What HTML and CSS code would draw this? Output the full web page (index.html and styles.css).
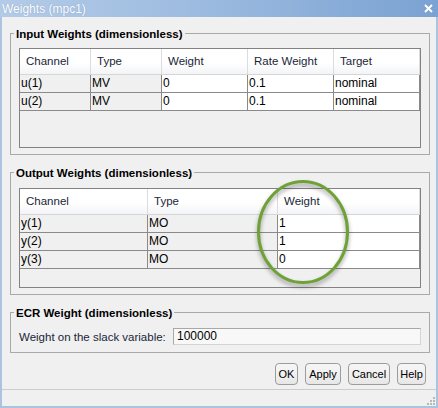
FILE: index.html
```html
<!DOCTYPE html>
<html>
<head>
<meta charset="utf-8">
<title>Weights (mpc1)</title>
<link rel="stylesheet" href="styles.css">
</head>
<body>
<div class="window">
  <div class="titlebar">
    <span class="title">Weights (mpc1)</span>
    <svg class="close" width="9" height="9" viewBox="0 0 9 9"><path d="M1 1 L8 8 M8 1 L1 8" stroke="#ffffff" stroke-width="1.8" fill="none"/></svg>
  </div>
  <div class="frame">
    <section class="group g-input">
      <div class="group-title">Input Weights (dimensionless)</div>
      <div class="table t-input">
        <div class="thead">
          <div class="th">Channel</div><div class="th">Type</div><div class="th">Weight</div><div class="th">Rate Weight</div><div class="th">Target</div>
        </div>
        <div class="tr">
          <div class="td ro">u(1)</div><div class="td ro">MV</div><div class="td">0</div><div class="td">0.1</div><div class="td">nominal</div>
        </div>
        <div class="tr">
          <div class="td ro">u(2)</div><div class="td ro">MV</div><div class="td">0</div><div class="td">0.1</div><div class="td">nominal</div>
        </div>
        <div class="filler f-input"></div>
      </div>
    </section>

    <section class="group g-output">
      <div class="group-title">Output Weights (dimensionless)</div>
      <div class="table t-output">
        <div class="thead">
          <div class="th">Channel</div><div class="th">Type</div><div class="th">Weight</div>
        </div>
        <div class="tr">
          <div class="td ro">y(1)</div><div class="td ro">MO</div><div class="td">1</div>
        </div>
        <div class="tr">
          <div class="td ro">y(2)</div><div class="td ro">MO</div><div class="td">1</div>
        </div>
        <div class="tr">
          <div class="td ro">y(3)</div><div class="td ro">MO</div><div class="td">0</div>
        </div>
        <div class="filler f-output"></div>
      </div>
    </section>

    <section class="group g-ecr">
      <div class="group-title">ECR Weight (dimensionless)</div>
      <div class="ecr-row">
        <span class="label">Weight on the slack variable:</span>
        <div class="field">100000</div>
      </div>
    </section>

    <div class="buttons">
      <div class="btn b-ok">OK</div>
      <div class="btn b-apply">Apply</div>
      <div class="btn b-cancel">Cancel</div>
      <div class="btn b-help">Help</div>
    </div>

    <div class="statusbar">
      <svg class="grip" width="12" height="10" viewBox="0 0 12 10">
        <rect x="9" y="1" width="2" height="2" fill="#b8b8b8"/>
        <rect x="6" y="4" width="2" height="2" fill="#b8b8b8"/>
        <rect x="9" y="4" width="2" height="2" fill="#b8b8b8"/>
        <rect x="3" y="7" width="2" height="2" fill="#b8b8b8"/>
        <rect x="6" y="7" width="2" height="2" fill="#b8b8b8"/>
        <rect x="9" y="7" width="2" height="2" fill="#b8b8b8"/>
      </svg>
    </div>
  </div>

  <svg class="highlight" width="110" height="122" viewBox="0 0 110 122">
    <ellipse cx="53" cy="57" rx="44.5" ry="50.5" fill="none" stroke="#6ea238" stroke-width="3"/>
  </svg>
</div>
</body>
</html>
```
FILE: styles.css
```css
html, body {
  margin: 0;
  padding: 0;
  background: #f0f0f0;
}

.window {
  position: relative;
  width: 438px;
  height: 408px;
  display: flex;
  flex-direction: column;
  font-family: "Liberation Sans", Arial, sans-serif;
  font-size: 12px;
  overflow: hidden;
}

.titlebar {
  height: 17px;
  flex: none;
  display: flex;
  align-items: center;
  justify-content: space-between;
  padding: 0 5px 0 2px;
  background: linear-gradient(to right, #b3cbe7 0%, #9dbbe0 45%, #7aa2d2 100%);
}

.title {
  color: #ffffff;
  font-size: 12px;
  line-height: 16px;
  text-shadow: 0 0 1px rgba(40, 70, 120, 0.35);
}

.close {
  display: block;
  margin-top: -1px;
}

.frame {
  flex: 1;
  min-height: 0;
  display: flex;
  flex-direction: column;
  border-left: 2px solid #aac3e1;
  border-right: 2px solid #aac3e1;
  border-bottom: 2px solid #aac3e1;
  background: #f0f0f0;
}

.group {
  flex: none;
  margin: 0 6px 0 8px;
  border: 1px solid #a9a9a9;
  padding: 0 8px 6px 8px;
}

.g-input { margin-top: 16px; }
.g-output { margin-top: 17px; }
.g-ecr { margin-top: 17px; padding-bottom: 7px; }

.group-title {
  display: block;
  width: max-content;
  margin: -7px 0 0 -5px;
  padding: 0 2px;
  height: 14px;
  line-height: 14px;
  font-size: 11.5px;
  font-weight: bold;
  color: #000000;
  background: #f0f0f0;
}

.table {
  width: 402px;
  box-sizing: border-box;
  border: 1px solid #828282;
  background: #f0f0f0;
  margin-top: 7px;
}

.g-output .table { margin-top: 8px; }

.thead, .tr {
  display: grid;
}

.t-input .thead, .t-input .tr {
  grid-template-columns: 71px 71px 86px 86px 86px;
}

.t-output .thead, .t-output .tr {
  grid-template-columns: 128px 130px 142px;
}

.th {
  box-sizing: border-box;
  height: 26px;
  padding-left: 6px;
  line-height: 25px;
  font-size: 11.5px;
  color: #1a2638;
  background: linear-gradient(to bottom, #ffffff 0%, #ffffff 55%, #f3f4f6 100%);
  border-right: 1px solid #dcdcdc;
  border-bottom: 1px solid #d6d6d6;
  white-space: nowrap;
}

.td {
  box-sizing: border-box;
  height: 18px;
  padding-left: 1px;
  line-height: 17px;
  font-size: 12px;
  color: #000000;
  background: #ffffff;
  border-right: 1px solid #8a8a8a;
  border-bottom: 1px solid #8a8a8a;
  white-space: nowrap;
}

.td.ro {
  background: #f0f0f0;
}

.f-input { height: 36px; }
.f-output { height: 18px; }

.ecr-row {
  margin-top: 8px;
  display: flex;
  align-items: center;
  justify-content: space-between;
}

.label {
  font-size: 11.5px;
  color: #1a2638;
}

.field {
  box-sizing: border-box;
  width: 248px;
  height: 17px;
  padding-left: 3px;
  line-height: 15px;
  font-size: 12px;
  color: #000000;
  background: #f8f8f8;
  border: 1px solid #a8a8a8;
  border-right-color: #d4d4d4;
  border-bottom-color: #d4d4d4;
}

.buttons {
  flex: none;
  margin-top: 10px;
  margin-right: 10px;
  display: flex;
  justify-content: flex-end;
  gap: 7px;
}

.btn {
  box-sizing: border-box;
  height: 22px;
  line-height: 20px;
  text-align: center;
  font-size: 11px;
  color: #000000;
  background: linear-gradient(to bottom, #f6f6f6 0%, #efefef 60%, #e6e6e6 100%);
  border: 1px solid #9c9c9c;
  border-radius: 4px;
}

.b-ok { width: 23px; }
.b-apply { width: 36px; }
.b-cancel { width: 42px; }
.b-help { width: 29px; }

.statusbar {
  margin-top: auto;
  height: 17px;
  flex: none;
  box-sizing: border-box;
  border-top: 1px solid #c8cdd4;
  display: flex;
  justify-content: flex-end;
  align-items: flex-end;
}

.grip {
  display: block;
}

.highlight {
  position: absolute;
  left: 250px;
  top: 175px;
  filter: drop-shadow(0 3px 2px rgba(0, 0, 0, 0.35));
}
```
